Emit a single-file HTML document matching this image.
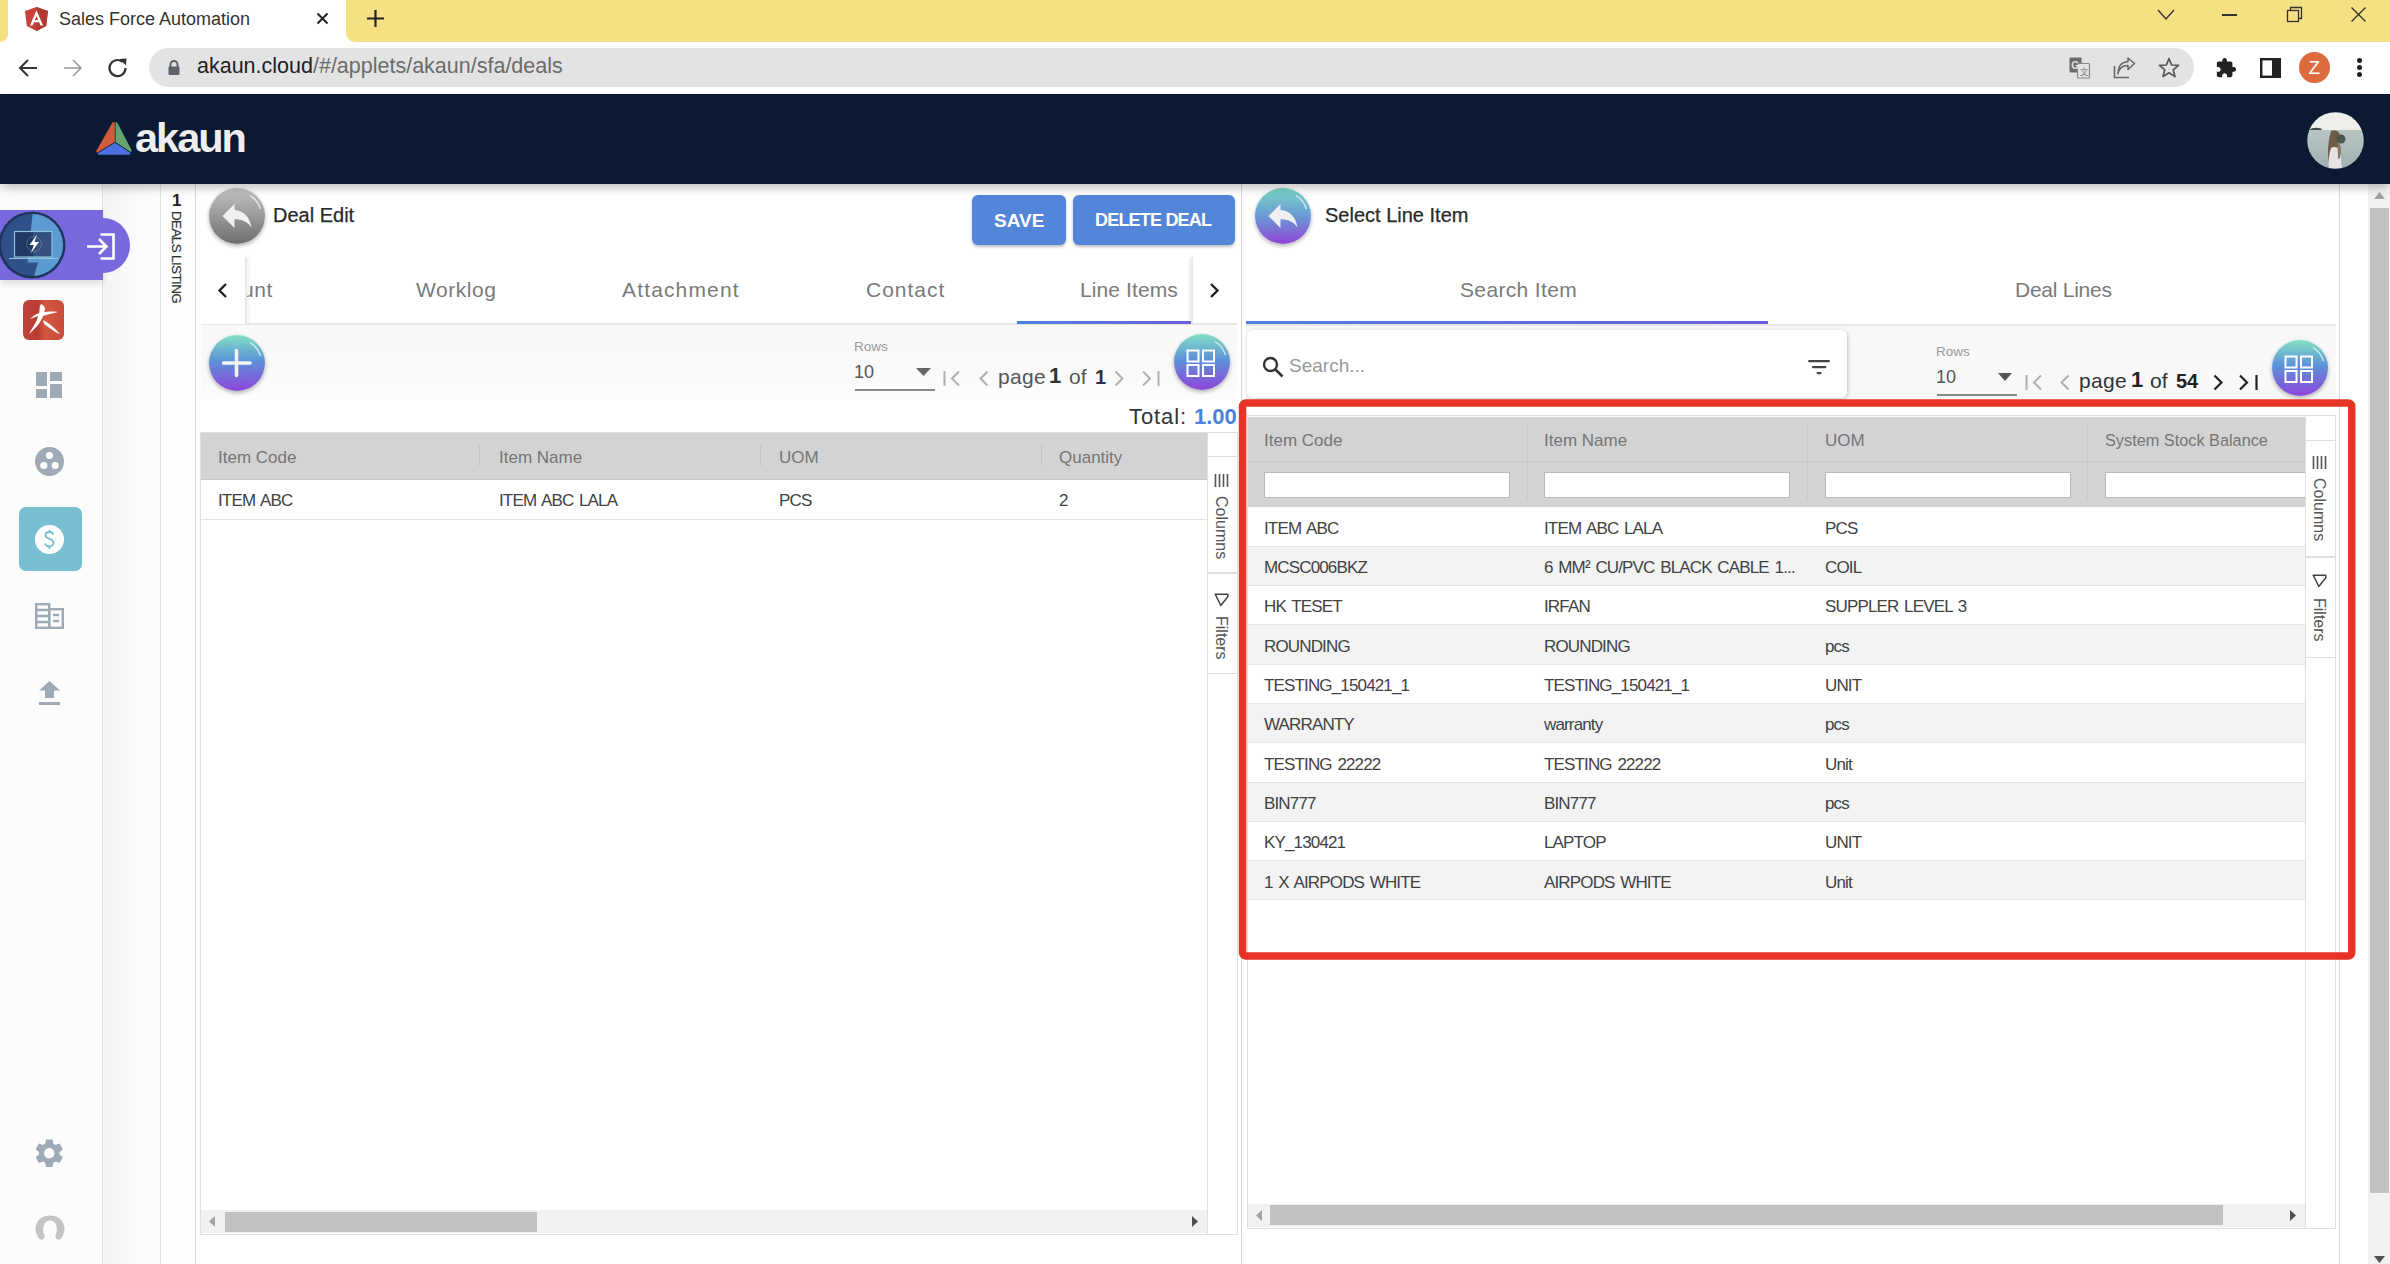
<!DOCTYPE html>
<html><head><meta charset="utf-8">
<style>
*{box-sizing:border-box;margin:0;padding:0}
html,body{width:2390px;height:1264px;overflow:hidden;background:#fff}
body{position:relative;font-family:"Liberation Sans",sans-serif;color:#333}
.a{position:absolute}
.t{position:absolute;line-height:1;white-space:nowrap}
.gh{font-size:17px;color:#757575}
.gc{font-size:17px;color:#424242;letter-spacing:-0.85px;word-spacing:1.8px}
.gs{font-size:16px;color:#555;transform-origin:0 0;transform:rotate(90deg)}
.inp{height:26px;background:#fff;border:1px solid #b5bcbf}
</style></head><body>

<!-- ============ CHROME TAB STRIP ============ -->
<div class="a" style="left:0;top:0;width:2390px;height:42px;background:#f6e084"></div>
<div class="a" style="left:8px;top:0;width:338px;height:43px;background:#fff;border-radius:0 0 0 0"></div>
<div class="a" style="left:0;top:30px;width:8px;height:13px;background:#fff"></div>
<div class="a" style="left:0;top:0;width:8px;height:42px;background:#f6e084;border-radius:0 0 8px 0"></div>
<div class="a" style="left:346px;top:30px;width:10px;height:13px;background:#fff"></div>
<div class="a" style="left:346px;top:0;width:10px;height:42px;background:#f6e084;border-radius:0 0 0 9px"></div>
<!-- angular icon -->
<svg class="a" style="left:25px;top:7px" width="23" height="24" viewBox="0 0 23 24">
  <path d="M11.5 0 L23 4 L21.2 19 L11.5 24 L1.8 19 L0 4 Z" fill="#c8423a"/>
  <path d="M11.5 0 L23 4 L21.2 19 L11.5 24 Z" fill="#b13a33"/>
  <path d="M11.5 3.2 L5 18.5 H7.6 L8.9 15.2 H14.1 L15.4 18.5 H18 Z M9.9 13 L11.5 9 L13.1 13 Z" fill="#fff"/>
</svg>
<div class="t" id="tabtitle" style="left:59px;top:10.3px;font-size:18px;color:#333">Sales Force Automation</div>
<svg class="a" style="left:316px;top:12px" width="13" height="13" viewBox="0 0 13 13"><path d="M1.5 1.5 L11.5 11.5 M11.5 1.5 L1.5 11.5" stroke="#222" stroke-width="2"/></svg>
<svg class="a" style="left:366px;top:9px" width="19" height="19" viewBox="0 0 19 19"><path d="M9.5 1 V18 M1 9.5 H18" stroke="#222" stroke-width="2.2"/></svg>
<!-- window controls -->
<svg class="a" style="left:2156px;top:8px" width="20" height="14" viewBox="0 0 20 14"><path d="M2 2 L10 11 L18 2" stroke="#333" stroke-width="1.4" fill="none"/></svg>
<div class="a" style="left:2222px;top:14px;width:15px;height:1.5px;background:#333"></div>
<svg class="a" style="left:2286px;top:6px" width="17" height="17" viewBox="0 0 17 17"><rect x="1.5" y="4.5" width="11" height="11" fill="none" stroke="#333" stroke-width="1.3"/><path d="M4.5 4.5 V1.5 H15.5 V12.5 H12.5" fill="none" stroke="#333" stroke-width="1.3"/></svg>
<svg class="a" style="left:2350px;top:6px" width="17" height="17" viewBox="0 0 17 17"><path d="M1.5 1.5 L15.5 15.5 M15.5 1.5 L1.5 15.5" stroke="#333" stroke-width="1.4"/></svg>

<!-- ============ CHROME TOOLBAR ============ -->
<div class="a" style="left:0;top:42px;width:2390px;height:52px;background:#fff"></div>
<svg class="a" style="left:17px;top:57px" width="22" height="22" viewBox="0 0 22 22"><path d="M20 11 H3 M11 3 L3 11 L11 19" stroke="#333" stroke-width="2" fill="none"/></svg>
<svg class="a" style="left:62px;top:57px" width="22" height="22" viewBox="0 0 22 22"><path d="M2 11 H19 M11 3 L19 11 L11 19" stroke="#999" stroke-width="1.6" fill="none"/></svg>
<svg class="a" style="left:106px;top:56px" width="24" height="24" viewBox="0 0 24 24"><path d="M19.5 12 A8 8 0 1 1 16.5 5.8" stroke="#333" stroke-width="2.2" fill="none"/><path d="M13.5 3 L20.5 2.5 L20 9.5 Z" fill="#333"/></svg>
<div class="a" style="left:149px;top:48px;width:2045px;height:39px;background:#e3e3e3;border-radius:20px"></div>
<svg class="a" style="left:167px;top:60px" width="14" height="16" viewBox="0 0 14 16"><path d="M3.5 7 V4.5 A3.5 3.5 0 0 1 10.5 4.5 V7" stroke="#5f6368" stroke-width="2" fill="none"/><rect x="1.5" y="6.5" width="11" height="8.5" rx="1" fill="#5f6368"/></svg>
<div class="t" id="url" style="left:197px;top:56.2px;font-size:21.5px;color:#202124">akaun.cloud<span style="color:#6b6b6b">/#/applets/akaun/sfa/deals</span></div>
<!-- toolbar right icons -->
<svg class="a" style="left:2069px;top:57px" width="22" height="22" viewBox="0 0 22 22"><rect x="0.5" y="0.5" width="12" height="15" rx="1" fill="#6b6b6b"/><rect x="8.5" y="6.5" width="12" height="14.5" rx="1" fill="#e3e3e3" stroke="#888" stroke-width="1.2"/><text x="2.2" y="11.5" font-size="10" font-weight="bold" fill="#e3e3e3" font-family="Liberation Sans">G</text><text x="11" y="17.5" font-size="9" fill="#777" font-family="Liberation Sans">文</text></svg>
<svg class="a" style="left:2113px;top:57px" width="23" height="22" viewBox="0 0 23 22"><path d="M1.5 9 V20.5 H16" stroke="#666" stroke-width="1.6" fill="none"/><path d="M5 17 C6 11 10 8.5 15 8.5 V12.5 L21.5 6.5 L15 1 V4.8 C9 5 5 9 5 17 Z" stroke="#666" stroke-width="1.5" fill="none" stroke-linejoin="round"/></svg>
<svg class="a" style="left:2158px;top:57px" width="22" height="22" viewBox="0 0 22 22"><path d="M11 1.5 L13.6 8 L20.5 8.4 L15.2 12.8 L17 19.6 L11 15.8 L5 19.6 L6.8 12.8 L1.5 8.4 L8.4 8 Z" stroke="#555" stroke-width="1.7" fill="none" stroke-linejoin="round"/></svg>
<svg class="a" style="left:2215px;top:57px" width="22" height="22" viewBox="0 0 24 24"><path d="M20.5 11H19V7c0-1.1-.9-2-2-2h-4V3.5C13 2.12 11.88 1 10.5 1S8 2.12 8 3.5V5H4c-1.1 0-1.99.9-1.99 2v3.8H3.5c1.49 0 2.7 1.21 2.7 2.7s-1.21 2.7-2.7 2.7H2V20c0 1.1.9 2 2 2h3.8v-1.5c0-1.49 1.21-2.7 2.7-2.7 1.49 0 2.7 1.21 2.7 2.7V22H17c1.1 0 2-.9 2-2v-4h1.5c1.38 0 2.5-1.12 2.5-2.5S21.88 11 20.5 11z" fill="#222"/></svg>
<svg class="a" style="left:2260px;top:58px" width="21" height="20" viewBox="0 0 21 20"><rect x="1.2" y="1.2" width="18.6" height="17.6" fill="none" stroke="#222" stroke-width="2.4"/><rect x="12" y="1" width="8" height="18" fill="#222"/></svg>
<div class="a" style="left:2299px;top:52px;width:31px;height:31px;border-radius:50%;background:#de6b3e"></div>
<div class="t" style="left:2308.5px;top:58px;font-size:19px;color:#fff">Z</div>
<div class="a" style="left:2357px;top:58px;width:5px;height:5px;border-radius:50%;background:#222"></div>
<div class="a" style="left:2357px;top:65px;width:5px;height:5px;border-radius:50%;background:#222"></div>
<div class="a" style="left:2357px;top:72px;width:5px;height:5px;border-radius:50%;background:#222"></div>

<!-- ============ APP HEADER ============ -->
<div class="a" style="left:0;top:94px;width:2390px;height:90px;background:#0b1932;box-shadow:0 5px 10px -2px rgba(0,0,0,.28);z-index:2"></div>


<!-- logo -->
<svg class="a" style="left:95px;top:121px;z-index:3" width="38" height="35" viewBox="0 0 38 35">
  <path d="M17.5 1.5 Q19 0.5 19.8 1.8 L19.8 21 L2.5 31.5 Q0.5 32 1.5 29.5 Z" fill="#d05a3c"/>
  <path d="M20.5 1.2 Q21.5 0.8 22.5 2 L36.5 29 Q37 31 35.5 31 L20.5 21 Z" fill="#62a46c"/>
  <path d="M20 21.8 L35.2 31.8 Q36 33.6 34 33.8 L4 33.8 Q1.5 33.5 3.2 32 Z" fill="#4a70e2"/>
</svg>
<div class="t" id="akaun" style="left:135px;top:117px;font-size:41.5px;font-weight:bold;color:#eeeeee;letter-spacing:-2px;z-index:3">akaun</div>
<!-- avatar -->
<svg class="a" style="left:2307px;top:112px;z-index:3" width="57" height="57" viewBox="0 0 57 57">
  <defs><clipPath id="avc"><circle cx="28.5" cy="28.5" r="28.3"/></clipPath>
  <filter id="avb"><feGaussianBlur stdDeviation="0.7"/></filter><linearGradient id="sea" x1="0" y1="0" x2="0" y2="1"><stop offset="0" stop-color="#c4cecd"/><stop offset="1" stop-color="#9fb1b3"/></linearGradient></defs>
  <g clip-path="url(#avc)"><g filter="url(#avb)">
    <rect x="0" y="0" width="57" height="57" fill="url(#sea)"/>
    <rect x="0" y="0" width="57" height="18" fill="#eeeeea"/>
    <path d="M2 18 C5 15.5 10 15 14 16.5 L15 18 Z" fill="#3f4a44"/>
    <path d="M24 19 C28 17 32 19 33 23 C33 30 30 36 29 44 C28 50 25 52 22 50 C20 42 21 30 24 19 Z" fill="#6e5d48"/>
    <circle cx="34" cy="27" r="4.5" fill="#4d5450"/>
    <path d="M24 36 C27 34 31 35 33 38 L35 57 H22 C21 50 22 42 24 36 Z" fill="#e4e2e2"/>
    <path d="M31 30 C34 32 35 38 33 46 L31 47 C31 40 30 35 31 30 Z" fill="#8a7a6a"/>
  </g></g>
</svg>

<!-- ============ LEFT NAV ============ -->
<div class="a" style="left:0;top:184px;width:103px;height:1080px;background:#fcfcfc;border-right:1px solid #e4e4e4"></div>
<div class="a" style="left:103px;top:184px;width:57px;height:1080px;background:linear-gradient(90deg,#f3f3f3,#fbfbfb 60%,#fdfdfd)"></div>
<div class="a" style="left:160px;top:184px;width:1px;height:1080px;background:#e2e2e2"></div>
<div class="a" style="left:161px;top:184px;width:34px;height:1080px;background:#fefefe"></div>
<div class="a" style="left:195px;top:184px;width:1px;height:1080px;background:#dadada"></div>
<!-- purple login bar -->
<div class="a" style="left:0;top:210px;width:103px;height:70px;background:#7868de;box-shadow:0 4px 6px rgba(0,0,0,.12)"></div>
<div class="a" style="left:76px;top:218px;width:54px;height:55px;border-radius:50%;background:#7868de"></div>
<svg class="a" style="left:-2px;top:210px" width="70" height="70" viewBox="0 0 70 70">
  <circle cx="34" cy="35" r="33.5" fill="#1f355c"/>
  <clipPath id="lc"><circle cx="34" cy="35" r="31"/></clipPath>
  <g clip-path="url(#lc)">
    <rect x="0" y="0" width="70" height="70" fill="#30508a"/>
    <path d="M35 0 L70 0 L70 70 L35 70 L40 52.5 L29.5 52.5 Z" fill="#5c9bd1"/>
  </g>
  <defs><linearGradient id="scr" x1="0" x2="1"><stop offset="0" stop-color="#223864"/><stop offset=".5" stop-color="#223864"/><stop offset=".5" stop-color="#34507f"/><stop offset="1" stop-color="#34507f"/></linearGradient></defs><rect x="16.5" y="21.5" width="37.5" height="25.5" fill="url(#scr)" stroke="#8fc3d8" stroke-width="1.2"/>
  <path d="M11 48.5 H60" stroke="#8fc3d8" stroke-width="1.2"/>
  <path d="M39 24.5 L31.5 35 H36 L32.5 43.5 L41 32 H36.5 Z" fill="#fff"/>
  <circle cx="36" cy="34" r="7.5" fill="none" stroke="#8fb0d0" stroke-width="0.6" opacity=".6"/>
</svg>
<svg class="a" style="left:86px;top:233px" width="30" height="27" viewBox="0 0 30 27"><path d="M14.5 1.5 H27.5 V25.5 H14.5" stroke="#fff" stroke-width="2.6" fill="none"/><path d="M1 13.5 H20 M13 6 L20.5 13.5 L13 21" stroke="#fff" stroke-width="2.6" fill="none"/></svg>
<!-- red app icon -->
<div class="a" style="left:23px;top:300px;width:41px;height:40px;border-radius:6px;background:linear-gradient(90deg,#c1433a,#b93c34 35%,#d2573f 55%,#c94a3a)"></div>
<svg class="a" style="left:23px;top:300px" width="41" height="40" viewBox="0 0 41 40">
  <path d="M18 4 C22 6 23 9 21 12 C24 12 28 11 35 12 C30 13 24 15 20 16 C18 22 14 27 6 34 C9 28 14 22 15 16 C12 17 10 18 7 19 C10 16 13 14 16 13 C17 10 16 7 18 4 Z" fill="#fff"/>
  <path d="M20 20 C26 23 32 28 37 34 C33 33 28 29 21 24 Z" fill="#fff"/>
</svg>
<!-- dashboard icon -->
<svg class="a" style="left:36px;top:372px" width="26" height="26" viewBox="0 0 26 26" fill="#9eaab5">
  <rect x="0" y="0" width="11" height="14"/><rect x="0" y="17" width="11" height="9"/><rect x="14" y="0" width="12" height="9"/><rect x="14" y="12" width="12" height="14"/>
</svg>
<!-- group icon -->
<svg class="a" style="left:35px;top:447px" width="29" height="29" viewBox="0 0 29 29">
  <circle cx="14.5" cy="14.5" r="14.5" fill="#9eaab5"/>
  <circle cx="14.5" cy="8.5" r="3.6" fill="#fff"/><circle cx="8.8" cy="18.5" r="3.6" fill="#fff"/><circle cx="20.2" cy="18.5" r="3.6" fill="#fff"/>
</svg>
<!-- active dollar -->
<div class="a" style="left:19px;top:507px;width:63px;height:64px;border-radius:7px;background:#78bfd3"></div>
<svg class="a" style="left:35px;top:525px" width="29" height="29" viewBox="0 0 29 29">
  <circle cx="14.5" cy="14.5" r="14.5" fill="#fff"/>
  <path d="M18.5 9.5 C17.8 7.8 16.3 7 14.5 7 C12.2 7 10.5 8.3 10.5 10.3 C10.5 12.5 12.5 13.2 14.5 13.8 C16.8 14.5 18.5 15.3 18.5 17.8 C18.5 19.9 16.8 21.5 14.5 21.5 C12.2 21.5 10.6 20.3 10 18.5 M14.5 5 V7 M14.5 21.5 V24" stroke="#78bfd3" stroke-width="1.8" fill="none"/>
</svg>
<!-- building icon -->
<svg class="a" style="left:35px;top:603px" width="29" height="26" viewBox="0 0 29 26" fill="none" stroke="#9eaab5" stroke-width="2.4">
  <rect x="1.2" y="1.2" width="13" height="23.6"/><path d="M1.2 7 H14 M1.2 13 H14 M1.2 19 H14"/>
  <rect x="14.2" y="6.2" width="13.6" height="18.6"/><path d="M18 12 H24 M18 18 H24"/>
</svg>
<!-- upload icon -->
<svg class="a" style="left:39px;top:681px" width="21" height="24" viewBox="0 0 21 24" fill="#9eaab5">
  <path d="M10.5 0 L21 9.5 H15 V17 H6 V9.5 H0 Z"/><rect x="0" y="21" width="21" height="3"/>
</svg>
<!-- gear -->
<svg class="a" style="left:32px;top:1136px" width="34.5" height="34.5" viewBox="0 0 24 24"><path fill="#9eaab5" d="M19.14 12.94c.04-.3.06-.61.06-.94 0-.32-.02-.64-.07-.94l2.03-1.58c.18-.14.23-.41.12-.61l-1.92-3.32c-.12-.22-.37-.29-.59-.22l-2.39.96c-.5-.38-1.03-.7-1.62-.94l-.36-2.54c-.04-.24-.24-.41-.48-.41h-3.84c-.24 0-.43.17-.47.41l-.36 2.54c-.59.24-1.13.57-1.62.94l-2.39-.96c-.22-.08-.47 0-.59.22L2.74 8.87c-.12.21-.08.47.12.61l2.03 1.58c-.05.3-.09.63-.09.94s.02.64.07.94l-2.03 1.58c-.18.14-.23.41-.12.61l1.92 3.32c.12.22.37.29.59.22l2.39-.96c.5.38 1.03.7 1.62.94l.36 2.54c.05.24.24.41.48.41h3.84c.24 0 .44-.17.47-.41l.36-2.54c.59-.24 1.13-.56 1.62-.94l2.39.96c.22.08.47 0 .59-.22l1.92-3.32c.12-.22.07-.47-.12-.61l-2.01-1.58zM12 15.6c-1.98 0-3.6-1.62-3.6-3.6s1.62-3.6 3.6-3.6 3.6 1.62 3.6 3.6-1.62 3.6-3.6 3.6z"/></svg>
<!-- person arc -->
<svg class="a" style="left:35px;top:1215px" width="30" height="26" viewBox="0 0 30 26">
  <path d="M4 23.5 C0.5 19 0 14 1 10.5 C2.5 4 8 0.5 15 0.5 C22 0.5 27.5 4 29 10.5 C30 14 29.5 19 26 23.5 C24.5 25 22 25 21 23.5 C20 22 20.5 20.5 21 19 C22.5 16 22 12 21 10 C20 7 18 5.5 15 5.5 C12 5.5 10 7 9 10 C8 12 7.5 16 9 19 C9.5 20.5 10 22 9 23.5 C8 25 5.5 25 4 23.5 Z" fill="#c4c4c4"/>
</svg>
<!-- deals listing strip -->
<div class="t" style="left:172px;top:192px;font-size:17px;font-weight:bold;color:#222">1</div>
<div class="t" id="dl" style="left:182.5px;top:211px;font-size:13.5px;letter-spacing:-0.65px;color:#333;-webkit-text-stroke:0.2px #333;transform-origin:0 0;transform:rotate(90deg)">DEALS LISTING</div>


<!-- ============ LEFT PANEL ============ -->
<!-- back button grey -->
<div class="a" style="left:209px;top:188px;width:56px;height:56px;border-radius:50%;background:linear-gradient(180deg,#c4c4c4,#6e6e6e);box-shadow:0 2px 4px rgba(0,0,0,.3)"></div>
<svg class="a" style="left:209px;top:188px" width="56" height="56" viewBox="0 0 56 56"><path d="M13.5 28 L25.5 16 V22 C34.5 22.5 41 29 42.5 39.5 C38.5 33.5 33 31.2 25.5 31.2 V40 Z" fill="#f0f0f0"/><path d="M41 7.5 A 25 25 0 0 1 51.5 21" stroke="#fff" stroke-width="1.4" fill="none" opacity=".75"/></svg>
<div class="t" id="dealedit" style="left:273px;top:204.7px;font-size:20px;color:#2a2a2a;-webkit-text-stroke:0.25px #2a2a2a">Deal Edit</div>
<!-- buttons -->
<div class="a" style="left:972px;top:195px;width:94px;height:50px;border-radius:6px;background:#5385d8;box-shadow:0 2px 3px rgba(0,0,0,.25)"></div>
<div class="t" style="left:994px;top:211px;font-size:19px;font-weight:bold;color:#fff">SAVE</div>
<div class="a" style="left:1073px;top:195px;width:162px;height:50px;border-radius:6px;background:#5385d8;box-shadow:0 2px 3px rgba(0,0,0,.25)"></div>
<div class="t" style="left:1095px;top:211px;font-size:18px;font-weight:bold;letter-spacing:-0.8px;color:#fff">DELETE DEAL</div>
<!-- tabs -->
<svg class="a" style="left:216px;top:282px" width="13" height="17" viewBox="0 0 13 17"><path d="M10 2 L3.5 8.5 L10 15" stroke="#222" stroke-width="2.4" fill="none"/></svg>
<div class="t" style="left:242px;top:279.4px;font-size:21px;color:#7a7a7a;letter-spacing:0.6px">unt</div>
<div class="a" style="left:201px;top:257px;width:45px;height:67px;background:#fff;z-index:1"></div>
<svg class="a" style="left:216px;top:282px;z-index:1" width="13" height="17" viewBox="0 0 13 17"><path d="M10 2 L3.5 8.5 L10 15" stroke="#222" stroke-width="2.4" fill="none"/></svg>
<div class="a" style="left:245px;top:257px;width:2px;height:67px;background:#e8e8e8;box-shadow:2px 0 3px rgba(0,0,0,.08);z-index:1"></div>
<div class="t" style="left:416px;top:279.4px;font-size:21px;color:#7a7a7a;letter-spacing:0.55px">Worklog</div>
<div class="t" style="left:622px;top:279.4px;font-size:21px;color:#7a7a7a;letter-spacing:1.15px">Attachment</div>
<div class="t" style="left:866px;top:279.4px;font-size:21px;color:#7a7a7a;letter-spacing:1.0px">Contact</div>
<div class="t" style="left:1080px;top:279.4px;font-size:21px;color:#7a7a7a;letter-spacing:0.1px">Line Items</div>
<div class="a" style="left:1191px;top:257px;width:2px;height:67px;background:#e8e8e8;box-shadow:-2px 0 3px rgba(0,0,0,.08)"></div>
<svg class="a" style="left:1208px;top:282px" width="13" height="17" viewBox="0 0 13 17"><path d="M3 2 L9.5 8.5 L3 15" stroke="#222" stroke-width="2.4" fill="none"/></svg>
<div class="a" style="left:201px;top:323px;width:1036px;height:2px;background:#e6e6e6"></div>
<div class="a" style="left:1017px;top:321px;width:174px;height:3px;background:linear-gradient(90deg,#4f82da,#6a5fdc)"></div>
<!-- toolbar -->
<div class="a" style="left:201px;top:325px;width:1036px;height:75px;background:linear-gradient(180deg,#f8f8f8,#fafafa 70%,#fdfdfd)"></div>
<div class="a" style="left:209px;top:335px;width:56px;height:56px;border-radius:50%;background:linear-gradient(180deg,#84e0c6 0%,#5b93d8 45%,#8f45d9 100%);box-shadow:0 2px 4px rgba(0,0,0,.3)"></div>
<svg class="a" style="left:209px;top:335px" width="56" height="56" viewBox="0 0 56 56"><path d="M41 7.5 A 25 25 0 0 1 51.5 21" stroke="#fff" stroke-width="1.4" fill="none" opacity=".7"/></svg><svg class="a" style="left:222px;top:348px" width="30" height="30" viewBox="0 0 30 30"><path d="M14.5 2.5 V27.5 M1.5 15 H28" stroke="#f2f2f2" stroke-width="3.6" stroke-linecap="round"/></svg>
<div class="t" style="left:854px;top:340px;font-size:13.5px;color:#999">Rows</div>
<div class="t" style="left:854px;top:362.5px;font-size:18px;color:#555">10</div>
<svg class="a" style="left:916px;top:368px" width="15" height="8" viewBox="0 0 15 8"><path d="M0 0 H15 L7.5 8 Z" fill="#666"/></svg>
<div class="a" style="left:855px;top:389px;width:80px;height:2px;background:#8a8a8a"></div>
<svg class="a" style="left:943px;top:370px" width="20" height="17" viewBox="0 0 20 17"><path d="M1.5 1 V16 M16 1.5 L9 8.5 L16 15.5" stroke="#b0b0b0" stroke-width="2" fill="none"/></svg>
<svg class="a" style="left:977px;top:370px" width="13" height="17" viewBox="0 0 13 17"><path d="M10.5 1.5 L3.5 8.5 L10.5 15.5" stroke="#b0b0b0" stroke-width="2" fill="none"/></svg>
<div class="t" style="left:998px;top:366px;font-size:21px;color:#555;letter-spacing:0.3px">page</div>
<div class="t" style="left:1049px;top:365px;font-size:22px;font-weight:bold;color:#333">1</div>
<div class="t" style="left:1069px;top:366px;font-size:21px;color:#555">of</div>
<div class="t" style="left:1095px;top:366.5px;font-size:20px;font-weight:bold;color:#333">1</div>
<svg class="a" style="left:1113px;top:370px" width="13" height="17" viewBox="0 0 13 17"><path d="M2.5 1.5 L9.5 8.5 L2.5 15.5" stroke="#b0b0b0" stroke-width="2" fill="none"/></svg>
<svg class="a" style="left:1141px;top:370px" width="20" height="17" viewBox="0 0 20 17"><path d="M2 1.5 L9 8.5 L2 15.5 M17.5 1 V16" stroke="#b0b0b0" stroke-width="2" fill="none"/></svg>
<div class="a" style="left:1174px;top:334px;width:56px;height:56px;border-radius:50%;background:linear-gradient(180deg,#84e0c6 0%,#5b93d8 45%,#8f45d9 100%);box-shadow:0 2px 4px rgba(0,0,0,.3)"></div>
<svg class="a" style="left:1174px;top:334px" width="56" height="56" viewBox="0 0 56 56"><path d="M41 7.5 A 25 25 0 0 1 51.5 21" stroke="#fff" stroke-width="1.4" fill="none" opacity=".7"/></svg><svg class="a" style="left:1186px;top:349px" width="30" height="29" viewBox="0 0 30 29" fill="none" stroke="#fff" stroke-width="2"><rect x="1.5" y="1.5" width="11" height="11"/><rect x="17" y="1.5" width="11" height="11"/><rect x="1.5" y="16" width="11" height="11"/><rect x="17" y="16" width="11" height="11"/></svg>
<div class="t" style="left:1129px;top:405.5px;font-size:22px;color:#333;letter-spacing:0.9px">Total:</div>
<div class="t" style="left:1194px;top:405.5px;font-size:22px;font-weight:bold;color:#4a82db">1.00</div>
<!-- left grid -->
<div class="a" style="left:200px;top:432px;width:1038px;height:803px;border:1px solid #dde1e3;background:#fff"></div>
<div class="a" style="left:201px;top:433px;width:1007px;height:47px;background:#d3d3d3;border-bottom:1px solid #c6c6c6"></div>
<div class="a" style="left:479px;top:445px;width:1px;height:21px;background:#c4c4c4"></div>
<div class="a" style="left:760px;top:445px;width:1px;height:21px;background:#c4c4c4"></div>
<div class="a" style="left:1041px;top:445px;width:1px;height:21px;background:#c4c4c4"></div>
<div class="t gh" style="left:218px;top:448.5px">Item Code</div>
<div class="t gh" style="left:499px;top:448.5px">Item Name</div>
<div class="t gh" style="left:779px;top:448.5px">UOM</div>
<div class="t gh" style="left:1059px;top:448.5px">Quantity</div>
<div class="a" style="left:201px;top:519px;width:1007px;height:1px;background:#dfe3e5"></div>
<div class="t gc" style="left:218px;top:492px">ITEM ABC</div>
<div class="t gc" style="left:499px;top:492px">ITEM ABC LALA</div>
<div class="t gc" style="left:779px;top:492px">PCS</div>
<div class="t gc" style="left:1059px;top:492px">2</div>
<!-- left side panel -->
<div class="a" style="left:1207px;top:432px;width:1px;height:803px;background:#dde1e3"></div>
<div class="a" style="left:1208px;top:456px;width:29px;height:1px;background:#dde1e3"></div>
<div class="a" style="left:1208px;top:572px;width:29px;height:2px;background:#dde1e3"></div>
<div class="a" style="left:1208px;top:673px;width:29px;height:1px;background:#dde1e3"></div>
<svg class="a" style="left:1214px;top:474px" width="16" height="13" viewBox="0 0 16 13" stroke="#555" stroke-width="1.6"><path d="M1.5 0 V13 M5.5 0 V13 M9.5 0 V13 M13.5 0 V13"/></svg>
<div class="t gs" style="left:1228.5px;top:496px">Columns</div>
<svg class="a" style="left:1214px;top:593px" width="15" height="14" viewBox="0 0 15 14"><path d="M1.2 1.2 H13.8 V3.8 L6.8 12.5 Z" fill="none" stroke="#444" stroke-width="1.5" stroke-linejoin="round"/></svg>
<div class="t gs" style="left:1228.5px;top:616px">Filters</div>
<!-- left scrollbar -->
<div class="a" style="left:201px;top:1210px;width:1006px;height:23px;background:#f1f1f1"></div>
<div class="a" style="left:225px;top:1212px;width:312px;height:20px;background:#c1c1c1"></div>
<svg class="a" style="left:208px;top:1216px" width="8" height="11" viewBox="0 0 8 11"><path d="M7 0 V11 L1 5.5 Z" fill="#a3a3a3"/></svg>
<svg class="a" style="left:1191px;top:1216px" width="8" height="11" viewBox="0 0 8 11"><path d="M1 0 V11 L7 5.5 Z" fill="#505050"/></svg>
<div class="a" style="left:1241px;top:184px;width:1px;height:1080px;background:#d6d6d6"></div>


<!-- ============ RIGHT PANEL ============ -->
<div class="a" style="left:1255px;top:188px;width:56px;height:56px;border-radius:50%;background:linear-gradient(180deg,#79d7c2 0%,#6b9bd6 50%,#8e44d6 100%);box-shadow:0 2px 4px rgba(0,0,0,.3)"></div>
<svg class="a" style="left:1255px;top:188px" width="56" height="56" viewBox="0 0 56 56"><path d="M13.5 28 L25.5 16 V22 C34.5 22.5 41 29 42.5 39.5 C38.5 33.5 33 31.2 25.5 31.2 V40 Z" fill="#f0f0f0"/><path d="M41 7.5 A 25 25 0 0 1 51.5 21" stroke="#fff" stroke-width="1.4" fill="none" opacity=".75"/></svg>
<div class="t" style="left:1325px;top:204.7px;font-size:20px;color:#2a2a2a;-webkit-text-stroke:0.25px #2a2a2a">Select Line Item</div>
<div class="t" style="left:1460px;top:279.4px;font-size:21px;color:#7a7a7a;letter-spacing:0.35px">Search Item</div>
<div class="t" style="left:2015px;top:279.4px;font-size:21px;color:#7a7a7a;letter-spacing:-0.25px">Deal Lines</div>
<div class="a" style="left:1246px;top:324px;width:1090px;height:2px;background:#e6e6e6"></div>
<div class="a" style="left:1246px;top:321px;width:522px;height:3px;background:linear-gradient(90deg,#4f82da,#6a5fdc)"></div>
<!-- search card -->
<div class="a" style="left:1246px;top:326px;width:1090px;height:73px;background:#f8f8f8"></div>
<div class="a" style="left:1247px;top:330px;width:600px;height:68px;background:#fff;border-radius:6px;box-shadow:1px 1px 4px rgba(0,0,0,.2)"></div>
<svg class="a" style="left:1262px;top:356px" width="22" height="22" viewBox="0 0 22 22"><circle cx="8.5" cy="8.5" r="6.5" fill="none" stroke="#333" stroke-width="2.4"/><path d="M13.5 13.5 L20.5 20.5" stroke="#333" stroke-width="2.6"/></svg>
<div class="t" style="left:1289px;top:356.3px;font-size:19px;color:#999">Search...</div>
<svg class="a" style="left:1807px;top:358px" width="24" height="18" viewBox="0 0 24 18" stroke="#444" stroke-width="2.3" stroke-linecap="round"><path d="M2.2 3.2 H21.8 M6 9.1 H18.3 M10.6 15.1 H13.5"/></svg>
<!-- right pagination -->
<div class="t" style="left:1936px;top:345px;font-size:13.5px;color:#999">Rows</div>
<div class="t" style="left:1936px;top:367.5px;font-size:18px;color:#555">10</div>
<svg class="a" style="left:1998px;top:373px" width="14" height="8" viewBox="0 0 14 8"><path d="M0 0 H14 L7 8 Z" fill="#555"/></svg>
<div class="a" style="left:1937px;top:394px;width:80px;height:2px;background:#8a8a8a"></div>
<svg class="a" style="left:2025px;top:374px" width="20" height="17" viewBox="0 0 20 17"><path d="M1.5 1 V16 M16 1.5 L9 8.5 L16 15.5" stroke="#b0b0b0" stroke-width="2" fill="none"/></svg>
<svg class="a" style="left:2058px;top:374px" width="13" height="17" viewBox="0 0 13 17"><path d="M10.5 1.5 L3.5 8.5 L10.5 15.5" stroke="#b0b0b0" stroke-width="2" fill="none"/></svg>
<div class="t" style="left:2079px;top:370px;font-size:21px;color:#333;letter-spacing:0.3px">page</div>
<div class="t" style="left:2131px;top:369px;font-size:22px;font-weight:bold;color:#222">1</div>
<div class="t" style="left:2150px;top:370px;font-size:21px;color:#333">of</div>
<div class="t" style="left:2176px;top:370.5px;font-size:20px;font-weight:bold;color:#222">54</div>
<svg class="a" style="left:2212px;top:374px" width="13" height="17" viewBox="0 0 13 17"><path d="M2.5 1.5 L9.5 8.5 L2.5 15.5" stroke="#222" stroke-width="2.2" fill="none"/></svg>
<svg class="a" style="left:2238px;top:374px" width="21" height="17" viewBox="0 0 21 17"><path d="M2 1.5 L9 8.5 L2 15.5 M18.5 1 V16" stroke="#222" stroke-width="2.2" fill="none"/></svg>
<div class="a" style="left:2272px;top:340px;width:56px;height:56px;border-radius:50%;background:linear-gradient(180deg,#84e0c6 0%,#5b93d8 45%,#8f45d9 100%);box-shadow:0 2px 4px rgba(0,0,0,.3)"></div>
<svg class="a" style="left:2272px;top:340px" width="56" height="56" viewBox="0 0 56 56"><path d="M41 7.5 A 25 25 0 0 1 51.5 21" stroke="#fff" stroke-width="1.4" fill="none" opacity=".7"/></svg><svg class="a" style="left:2284px;top:355px" width="30" height="29" viewBox="0 0 30 29" fill="none" stroke="#fff" stroke-width="2"><rect x="1.5" y="1.5" width="11" height="11"/><rect x="17" y="1.5" width="11" height="11"/><rect x="1.5" y="16" width="11" height="11"/><rect x="17" y="16" width="11" height="11"/></svg>
<!-- right grid -->
<div class="a" style="left:1247px;top:415px;width:1089px;height:814px;border:1px solid #dde1e3;background:#fff"></div>
<div class="a" style="left:1248px;top:417px;width:1057px;height:90px;background:#d3d3d3"></div>
<div class="a" style="left:1248px;top:461px;width:1057px;height:1px;background:#c8c8c8"></div>
<div class="a" style="left:1527px;top:425px;width:1px;height:75px;background:#c9c9c9"></div>
<div class="a" style="left:1807px;top:425px;width:1px;height:75px;background:#c9c9c9"></div>
<div class="a" style="left:2087px;top:425px;width:1px;height:75px;background:#c9c9c9"></div>
<div class="t gh" style="left:1264px;top:431.5px">Item Code</div>
<div class="t gh" style="left:1544px;top:431.5px">Item Name</div>
<div class="t gh" style="left:1825px;top:431.5px">UOM</div>
<div class="t gh" style="left:2105px;top:431.5px;font-size:16.3px">System Stock Balance</div>
<div class="a inp" style="left:1264px;top:472px;width:246px"></div>
<div class="a inp" style="left:1544px;top:472px;width:246px"></div>
<div class="a inp" style="left:1825px;top:472px;width:246px"></div>
<div class="a inp" style="left:2105px;top:472px;width:200px;border-right:none"></div>
<div class="a" style="left:1248px;top:507.5px;width:1057px;height:39.3px;background:#fff;border-bottom:1px solid #e4e6e8"></div>
<div class="t gc" style="left:1264px;top:519.8px">ITEM ABC</div><div class="t gc" style="left:1544px;top:519.8px">ITEM ABC LALA</div><div class="t gc" style="left:1825px;top:519.8px">PCS</div>
<div class="a" style="left:1248px;top:546.8px;width:1057px;height:39.3px;background:#f3f3f3;border-bottom:1px solid #e4e6e8"></div>
<div class="t gc" style="left:1264px;top:559.0px">MCSC006BKZ</div><div class="t gc" style="left:1544px;top:559.0px">6 MM² CU/PVC BLACK CABLE 1...</div><div class="t gc" style="left:1825px;top:559.0px">COIL</div>
<div class="a" style="left:1248px;top:586.1px;width:1057px;height:39.3px;background:#fff;border-bottom:1px solid #e4e6e8"></div>
<div class="t gc" style="left:1264px;top:598.4px">HK TESET</div><div class="t gc" style="left:1544px;top:598.4px">IRFAN</div><div class="t gc" style="left:1825px;top:598.4px">SUPPLER LEVEL 3</div>
<div class="a" style="left:1248px;top:625.4px;width:1057px;height:39.3px;background:#f3f3f3;border-bottom:1px solid #e4e6e8"></div>
<div class="t gc" style="left:1264px;top:637.6px">ROUNDING</div><div class="t gc" style="left:1544px;top:637.6px">ROUNDING</div><div class="t gc" style="left:1825px;top:637.6px">pcs</div>
<div class="a" style="left:1248px;top:664.7px;width:1057px;height:39.3px;background:#fff;border-bottom:1px solid #e4e6e8"></div>
<div class="t gc" style="left:1264px;top:677.0px">TESTING_150421_1</div><div class="t gc" style="left:1544px;top:677.0px">TESTING_150421_1</div><div class="t gc" style="left:1825px;top:677.0px">UNIT</div>
<div class="a" style="left:1248px;top:704.0px;width:1057px;height:39.3px;background:#f3f3f3;border-bottom:1px solid #e4e6e8"></div>
<div class="t gc" style="left:1264px;top:716.2px">WARRANTY</div><div class="t gc" style="left:1544px;top:716.2px">warranty</div><div class="t gc" style="left:1825px;top:716.2px">pcs</div>
<div class="a" style="left:1248px;top:743.3px;width:1057px;height:39.3px;background:#fff;border-bottom:1px solid #e4e6e8"></div>
<div class="t gc" style="left:1264px;top:755.5px">TESTING 22222</div><div class="t gc" style="left:1544px;top:755.5px">TESTING 22222</div><div class="t gc" style="left:1825px;top:755.5px">Unit</div>
<div class="a" style="left:1248px;top:782.6px;width:1057px;height:39.3px;background:#f3f3f3;border-bottom:1px solid #e4e6e8"></div>
<div class="t gc" style="left:1264px;top:794.8px">BIN777</div><div class="t gc" style="left:1544px;top:794.8px">BIN777</div><div class="t gc" style="left:1825px;top:794.8px">pcs</div>
<div class="a" style="left:1248px;top:821.9px;width:1057px;height:39.3px;background:#fff;border-bottom:1px solid #e4e6e8"></div>
<div class="t gc" style="left:1264px;top:834.1px">KY_130421</div><div class="t gc" style="left:1544px;top:834.1px">LAPTOP</div><div class="t gc" style="left:1825px;top:834.1px">UNIT</div>
<div class="a" style="left:1248px;top:861.2px;width:1057px;height:39.3px;background:#f3f3f3;border-bottom:1px solid #e4e6e8"></div>
<div class="t gc" style="left:1264px;top:873.5px">1 X AIRPODS WHITE</div><div class="t gc" style="left:1544px;top:873.5px">AIRPODS WHITE</div><div class="t gc" style="left:1825px;top:873.5px">Unit</div>

<!-- right side panel -->
<div class="a" style="left:2305px;top:416px;width:1px;height:813px;background:#dde1e3"></div>
<div class="a" style="left:2306px;top:440px;width:29px;height:1px;background:#dde1e3"></div>
<div class="a" style="left:2306px;top:556px;width:29px;height:2px;background:#dde1e3"></div>
<div class="a" style="left:2306px;top:657px;width:29px;height:1px;background:#dde1e3"></div>
<svg class="a" style="left:2312px;top:456px" width="16" height="13" viewBox="0 0 16 13" stroke="#555" stroke-width="1.6"><path d="M1.5 0 V13 M5.5 0 V13 M9.5 0 V13 M13.5 0 V13"/></svg>
<div class="t gs" style="left:2326.5px;top:478px">Columns</div>
<svg class="a" style="left:2312px;top:574px" width="15" height="14" viewBox="0 0 15 14"><path d="M1.2 1.2 H13.8 V3.8 L6.8 12.5 Z" fill="none" stroke="#444" stroke-width="1.5" stroke-linejoin="round"/></svg>
<div class="t gs" style="left:2326.5px;top:598px">Filters</div>
<!-- right scrollbar -->
<div class="a" style="left:1248px;top:1204px;width:1057px;height:23px;background:#f1f1f1"></div>
<div class="a" style="left:1270px;top:1205px;width:953px;height:20px;background:#c1c1c1"></div>
<svg class="a" style="left:1255px;top:1210px" width="8" height="11" viewBox="0 0 8 11"><path d="M7 0 V11 L1 5.5 Z" fill="#a3a3a3"/></svg>
<svg class="a" style="left:2289px;top:1210px" width="8" height="11" viewBox="0 0 8 11"><path d="M1 0 V11 L7 5.5 Z" fill="#505050"/></svg>
<div class="a" style="left:2339px;top:184px;width:1px;height:1080px;background:#dcdcdc"></div>
<!-- red highlight -->
<svg class="a" style="left:1230px;top:390px;z-index:5" width="1140" height="580" viewBox="1230 390 1140 580"><rect x="1242.55" y="402.95" width="1109.2" height="553.1" rx="3.5" fill="none" stroke="#e83427" stroke-width="7.5"/></svg>
<!-- page scrollbar -->
<div class="a" style="left:2368px;top:184px;width:22px;height:1080px;background:#f1f1f1"></div>
<div class="a" style="left:2370px;top:208px;width:19px;height:985px;background:#c1c1c1"></div>
<svg class="a" style="left:2374px;top:192px" width="11" height="7" viewBox="0 0 11 7"><path d="M0 7 H11 L5.5 0 Z" fill="#a3a3a3"/></svg>
<svg class="a" style="left:2374px;top:1256px" width="11" height="7" viewBox="0 0 11 7"><path d="M0 0 H11 L5.5 7 Z" fill="#505050"/></svg>

</body></html>
